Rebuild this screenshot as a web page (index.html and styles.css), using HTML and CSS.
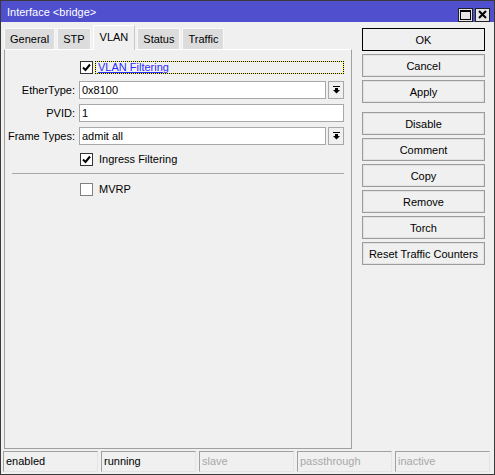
FILE: index.html
```html
<!DOCTYPE html>
<html lang="en">
<head>
  <meta charset="UTF-8" />
  <title>Interface &lt;bridge&gt;</title>
  <link rel="stylesheet" href="styles.css">
</head>
<body>
  <div class="window">
    <div class="titlebar">
      <span class="title">Interface &lt;bridge&gt;</span>
      <div class="title-btns">
        <span class="tbtn">
          <svg width="11" height="10" viewBox="0 0 11 10"><rect x="0.5" y="0.5" width="10" height="9" fill="none" stroke="#000"/><rect x="0" y="0" width="11" height="2" fill="#000"/></svg>
        </span>
        <span class="tbtn">
          <svg width="9" height="9" viewBox="0 0 9 9"><path d="M1 1 L8 8 M8 1 L1 8" stroke="#000" stroke-width="2"/></svg>
        </span>
      </div>
    </div>

    <div class="main">
      <div class="left">
        <div class="tabs">
          <div class="tab">General</div>
          <div class="tab">STP</div>
          <div class="tab active">VLAN</div>
          <div class="tab">Status</div>
          <div class="tab">Traffic</div>
        </div>

        <div class="panel">
          <div class="row">
            <div class="label"></div>
            <div class="field">
              <span class="check on"><svg width="9" height="9" viewBox="0 0 9 9"><path d="M1 4.5 L3.5 7 L8 1.5" fill="none" stroke="#000" stroke-width="2"/></svg></span>
              <span class="focus"><span class="link">VLAN Filtering</span></span>
            </div>
          </div>

          <div class="row">
            <div class="label">EtherType:</div>
            <div class="field">
              <div class="input">0x8100</div>
              <div class="drop">
                <svg width="7" height="8" viewBox="0 0 7 8"><rect x="0" y="0" width="7" height="1" fill="#000"/><rect x="2" y="2" width="3" height="2" fill="#000"/><path d="M0 4 L7 4 L3.5 7.5 Z" fill="#000"/></svg>
              </div>
            </div>
          </div>

          <div class="row">
            <div class="label">PVID:</div>
            <div class="field">
              <div class="input">1</div>
            </div>
          </div>

          <div class="row">
            <div class="label">Frame Types:</div>
            <div class="field">
              <div class="input">admit all</div>
              <div class="drop">
                <svg width="7" height="8" viewBox="0 0 7 8"><rect x="0" y="0" width="7" height="1" fill="#000"/><rect x="2" y="2" width="3" height="2" fill="#000"/><path d="M0 4 L7 4 L3.5 7.5 Z" fill="#000"/></svg>
              </div>
            </div>
          </div>

          <div class="row">
            <div class="label"></div>
            <div class="field">
              <span class="check on"><svg width="9" height="9" viewBox="0 0 9 9"><path d="M1 4.5 L3.5 7 L8 1.5" fill="none" stroke="#000" stroke-width="2"/></svg></span>
              <span class="check-label">Ingress Filtering</span>
            </div>
          </div>

          <div class="separator"></div>

          <div class="row">
            <div class="label"></div>
            <div class="field">
              <span class="check"></span>
              <span class="check-label">MVRP</span>
            </div>
          </div>
        </div>
      </div>

      <div class="actions">
        <button class="btn default">OK</button>
        <button class="btn">Cancel</button>
        <button class="btn">Apply</button>
        <button class="btn spaced">Disable</button>
        <button class="btn">Comment</button>
        <button class="btn">Copy</button>
        <button class="btn">Remove</button>
        <button class="btn">Torch</button>
        <button class="btn">Reset Traffic Counters</button>
      </div>
    </div>

    <div class="statusbar">
      <div class="status">enabled</div>
      <div class="status">running</div>
      <div class="status off">slave</div>
      <div class="status off">passthrough</div>
      <div class="status off">inactive</div>
    </div>
  </div>
</body>
</html>
```

FILE: styles.css
```css
* {
  box-sizing: border-box;
}

body {
  margin: 0;
  font-family: "Liberation Sans", Arial, sans-serif;
  font-size: 11px;
  color: #000;
  background-color: #f0f0f0;
}

.window {
  width: 495px;
  height: 475px;
  border: 1px solid #3a3a3a;
  background-color: #f0f0f0;
  display: flex;
  flex-direction: column;
}

.titlebar {
  height: 21px;
  background-color: #5050cf;
  color: #fff;
  display: flex;
  align-items: center;
  justify-content: space-between;
  padding: 0 4px 0 6px;
  flex-shrink: 0;
}

.title {
  font-size: 11px;
}

.title-btns {
  display: flex;
  gap: 2px;
  margin-top: 6px;
}

.tbtn {
  width: 15px;
  height: 14px;
  background-color: #e6e6e6;
  border: 1px solid #222;
  display: flex;
  align-items: center;
  justify-content: center;
}

.main {
  flex: 1;
  display: flex;
  min-height: 0;
}

.left {
  width: 348px;
  margin-left: 3px;
  display: flex;
  flex-direction: column;
}

.tabs {
  display: flex;
  align-items: flex-end;
  height: 27px;
}

.tab {
  height: 21px;
  padding: 0 5px;
  background-color: #dcdcdc;
  border: 1px solid #f8f8f8;
  border-bottom: none;
  margin-right: 2px;
  display: flex;
  align-items: center;
  font-size: 11px;
}

.tab.active {
  height: 25px;
  padding: 0 6px 2px;
  background-color: #f0f0f0;
  border-color: #fff #c8c8c8 transparent #fff;
  margin-bottom: -1px;
  position: relative;
}

.panel {
  flex: 1;
  border: 1px solid #a0a0a0;
  border-top-color: #fff;
  padding: 8px 7px 0 1px;
  display: flex;
  flex-direction: column;
  gap: 5px;
  margin-bottom: 2px;
}

.row {
  display: flex;
  align-items: center;
  height: 18px;
  gap: 4px;
}

.label {
  width: 69px;
  text-align: right;
  white-space: nowrap;
  font-size: 11px;
}

.field {
  flex: 1;
  display: flex;
  align-items: center;
  height: 18px;
  gap: 2px;
}

.input {
  flex: 1;
  height: 18px;
  background-color: #fff;
  border: 1px solid #a8a8a8;
  padding: 1px 2px;
  font-size: 11px;
  line-height: 14px;
}

.drop {
  width: 16px;
  height: 18px;
  border: 1px solid #a8a8a8;
  background-color: #f0f0f0;
  display: flex;
  align-items: center;
  justify-content: center;
}

.check {
  width: 13px;
  height: 13px;
  margin-left: 1px;
  background-color: #fff;
  border: 1px solid #808080;
  display: flex;
  align-items: center;
  justify-content: center;
  flex-shrink: 0;
}

.check.on {
  border-color: #333;
}

.check-label {
  margin-left: 4px;
  font-size: 11px;
}

.focus {
  flex: 1;
  height: 13px;
  border: 1px dotted #000;
  background: linear-gradient(#f0f0f0, #f0f0f0) padding-box, #ffff00 border-box;
  display: flex;
  align-items: center;
  padding-left: 2px;
}

.link {
  color: #2a2aff;
  text-decoration: underline;
  font-size: 11px;
  line-height: 12px;
}

.separator {
  height: 1px;
  background-color: #a8a8a8;
  margin: 0 0 1px 6px;
}

.actions {
  width: 123px;
  margin: 6px 0 0 10px;
  display: flex;
  flex-direction: column;
  gap: 3px;
}

.btn {
  height: 23px;
  font-family: "Liberation Sans", Arial, sans-serif;
  font-size: 11px;
  color: #000;
  background-color: #f0f0f0;
  border: 1px solid #9c9c9c;
  box-shadow: inset 0 0 0 1px #e2e2e2;
  padding: 0;
}

.btn.default {
  border-color: #000;
  box-shadow: none;
}

.btn.spaced {
  margin-top: 6px;
}

.statusbar {
  display: flex;
  gap: 3px;
  height: 23px;
  padding: 0 4px 2px 2px;
  flex-shrink: 0;
}

.status {
  flex: 1;
  border: 1px solid #a0a0a0;
  border-right-color: #e4e4e4;
  border-bottom-color: #e4e4e4;
  padding: 2px 2px 0;
  font-size: 11px;
  line-height: 15px;
}

.status.off {
  color: #a8a8a8;
}
```
